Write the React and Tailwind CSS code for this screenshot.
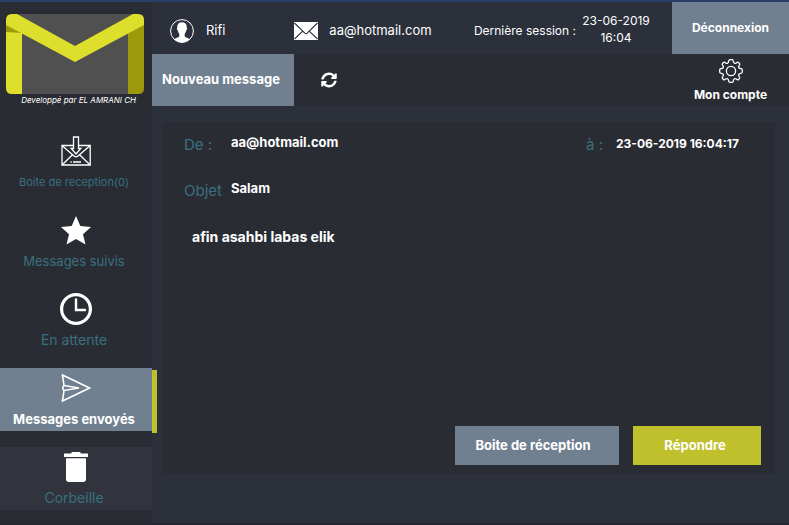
import React from "react";

function Logo() {
  return (
    <svg viewBox="0 0 138 80" className="h-20 w-full" preserveAspectRatio="none" role="img" aria-label="Logo messagerie">
      <path d="M6 0H132Q138 0 138 6V74Q138 80 132 80H6Q0 80 0 74V6Q0 0 6 0Z" fill="#505050" />
      <path d="M0 14L16 19V80H6Q0 80 0 74Z" fill="#dede2c" />
      <path d="M0 10L16 19L0 18Z" fill="#9c9a0a" />
      <path d="M138 10L122 19V80H132Q138 80 138 74Z" fill="#9c9a0a" />
      <path d="M6 0H11L69 32L127 0H132Q138 0 138 6V11L69 48L0 11V6Q0 0 6 0Z" fill="#dede2c" />
    </svg>
  );
}

function InboxIcon() {
  return (
    <svg viewBox="0 0 30 30" className="size-[30px]" fill="none" stroke="#fff" strokeWidth="1.3" aria-hidden="true">
      <path d="M12 9.5H1V29H29.2V9.5H18" />
      <path d="M1 9.5L13 20Q15 21.800 17 20L29.2 9.5M1 29L11.5 18.8M29.2 29L18.5 18.8" />
      <path d="M12.5 1H17.5V12.500H19.8L15 18L10.200 12.500H12.5Z" fill="#292c33" />
      <path d="M12 26H20M9.5 26H10.8" />
    </svg>
  );
}

function StarIcon() {
  return (
    <svg viewBox="0 0 30 29" className="h-[29px] w-[30px]" fill="#fff" aria-hidden="true">
      <path d="M15 0L19.3 10L30 11L22 18.2L24.5 28.5L15 23L5.500 28.5L8 18.2L0 11L10.700 10Z" />
    </svg>
  );
}

function ClockIcon() {
  return (
    <svg viewBox="0 0 32 32" className="size-8" fill="none" stroke="#fff" strokeLinecap="round" aria-hidden="true">
      <circle cx="16" cy="16" r="14.400" strokeWidth="3.200" />
      <path d="M16 6.500V17H25" strokeWidth="2.400" />
    </svg>
  );
}

function SendIcon() {
  return (
    <svg viewBox="0 0 30 28" className="h-7 w-[30px]" fill="none" stroke="#fff" strokeWidth="1.600" aria-hidden="true">
      <path d="M3 11.500L1.500 1L28.500 14L1.500 27L3 16.500" />
      <path d="M3 11.500L18 14L3 16.500Q0.500 14 3 11.500Z" />
    </svg>
  );
}

function TrashIcon() {
  return (
    <svg viewBox="0 0 24 30" className="h-[30px] w-6" fill="#fff" aria-hidden="true">
      <path d="M0 1.500H7L8 0H16L17 1.500H24V5H0Z" />
      <path d="M2 6.300H22V27Q22 30 19 30H5Q2 30 2 27Z" />
    </svg>
  );
}

function UserIcon() {
  return (
    <svg viewBox="0 0 24 24" className="size-6" aria-hidden="true">
      <circle cx="12" cy="12" r="11.400" fill="none" stroke="#fff" strokeWidth="1" />
      <path d="M12 3.200C8.500 3.200 7 5.500 7.300 8.500C6.500 9 7 11 7.800 11.500C8.200 13.300 9 14.300 9.300 15V17.500C8.500 18.700 5.500 19 4.200 20.300C8 24.500 16 24.500 19.800 20.300C18.500 19 15.500 18.700 14.700 17.500V15C15 14.300 15.800 13.300 16.200 11.500C17 11 17.500 9 16.700 8.500C17 5.500 15.500 3.200 12 3.200Z" fill="#fff" />
    </svg>
  );
}

function MailIcon() {
  return (
    <svg viewBox="0 0 24 18" className="h-[18px] w-6" aria-hidden="true">
      <path d="M0 0H24V18H0Z" fill="#fff" />
      <path d="M0.500 1L10.800 11.200Q12 12.200 13.200 11.200L23.500 1M0.500 17L8.500 9.300M23.500 17L15.500 9.300" fill="none" stroke="#2b303b" strokeWidth="1.100" />
    </svg>
  );
}

function RefreshIcon() {
  return (
    <svg viewBox="0 0 512 512" className="size-4" fill="#fff" aria-hidden="true">
      <path d="M371 143C340 114 300 98 256 98C178 98 110 152 91 227C90 232 85 236 79 236H22C15 236 9 229 10 222C32 104 136 16 256 16C321 16 382 41 427 85L463 49C478 34 504 45 504 66V200C504 213 493 224 480 224H346C325 224 314 198 329 183Z" />
      <path d="M32 288H166C187 288 198 314 183 329L141 369C172 398 212 414 256 414C334 414 402 360 421 285C422 280 427 276 433 276H490C497 276 503 283 502 290C480 408 376 496 256 496C191 496 130 471 85 427L49 463C34 478 8 467 8 446V312C8 299 19 288 32 288Z" />
    </svg>
  );
}

function GearIcon() {
  return (
    <svg viewBox="0 0 24 24" className="size-6" fill="none" stroke="#fff" strokeWidth="1.300" strokeLinejoin="round" aria-hidden="true">
      <circle cx="12" cy="12" r="4.600" />
      <path d="M9.700 2.200Q9.900 0.700 11 0.700H13Q14.100 0.700 14.300 2.200C14.600 4.300 16 4.900 17.300 3.900Q18.700 2.700 19.500 3.500L20.500 4.500Q21.300 5.300 20.100 6.700C19.100 8 19.700 9.400 21.800 9.700Q23.300 9.900 23.300 11V13Q23.300 14.100 21.800 14.300C19.700 14.600 19.100 16 20.100 17.300Q21.300 18.700 20.500 19.500L19.500 20.500Q18.700 21.300 17.300 20.100C16 19.100 14.600 19.700 14.300 21.800Q14.100 23.300 13 23.300H11Q9.900 23.300 9.700 21.800C9.400 19.700 8 19.100 6.700 20.100Q5.300 21.300 4.500 20.500L3.500 19.500Q2.700 18.700 3.900 17.300C4.900 16 4.300 14.600 2.200 14.300Q0.700 14.100 0.700 13V11Q0.700 9.900 2.200 9.700C4.300 9.400 4.900 8 3.900 6.700Q2.700 5.300 3.500 4.500L4.500 3.500Q5.300 2.700 6.700 3.900C8 4.900 9.400 4.300 9.700 2.200Z" />
    </svg>
  );
}

const items = [
  { label: "Boite de reception(0)", Icon: InboxIcon, tone: "text-[11px] text-[#3a7080]" },
  { label: "Messages suivis", Icon: StarIcon, tone: "text-[13px] text-[#3a7080]" },
  { label: "En attente", Icon: ClockIcon, tone: "text-[14px] text-[#3a7080]" },
  { label: "Messages envoyés", Icon: SendIcon, active: true, tone: "bg-[#708090] text-[13px] font-bold text-white" },
  { label: "Corbeille", Icon: TrashIcon, tone: "bg-[#31343d] text-[14px] text-[#3a7080]" },
];

function Sidebar() {
  return (
    <aside className="flex w-[152px] shrink-0 flex-col bg-[#292c33]">
      <div className="px-2 pt-3 pl-1.5">
        <Logo />
        <p className="h-[37px] pr-2 text-right text-[8px] leading-3 text-white italic">Developpé par EL AMRANI CH</p>
      </div>
      <nav className="flex flex-col gap-4">
        {items.map(({ label, Icon, tone, active }) => (
          <button key={label} type="button" className={"relative flex h-[63px] flex-col items-center pr-1 whitespace-nowrap " + tone}>
            <span className="flex h-10 items-center pl-1"><Icon /></span>
            <span className="leading-[22px]">{label}</span>
            {active && <span className="absolute top-0.5 left-full h-full w-[5px] bg-[#c0c02c]" />}
          </button>
        ))}
      </nav>
    </aside>
  );
}

function Header() {
  return (
    <header className="flex h-[52px] items-stretch text-[13px] text-white">
      <div className="flex grow items-center justify-between pt-1.5 pr-[22px] pl-[18px]">
        <div className="flex w-[106px] items-center gap-3">
          <UserIcon />
          <span>Rifi</span>
        </div>
        <div className="flex items-center gap-[11px]">
          <MailIcon />
          <span>aa@hotmail.com</span>
        </div>
        <div className="flex items-center gap-1.5 pl-6 whitespace-nowrap">
          <span className="text-[12px]">Dernière session :</span>
          <span className="-mt-1 w-[68px] text-center text-[12px] leading-[17px]">23-06-2019<br />16:04</span>
        </div>
      </div>
      <button type="button" className="w-[117px] shrink-0 bg-[#708090] text-[12px] font-bold">Déconnexion</button>
    </header>
  );
}

function Toolbar() {
  return (
    <div className="flex h-[52px] items-stretch bg-[#292c33] text-white">
      <button type="button" className="w-[142px] bg-[#708090] pr-1 text-[13px] font-bold whitespace-nowrap">Nouveau message</button>
      <button type="button" aria-label="Actualiser" className="ml-4 px-[11px]"><RefreshIcon /></button>
      <button type="button" className="ml-auto flex w-[117px] flex-col items-center gap-0.5 pt-[5px] text-[12px] leading-5 font-bold">
        <GearIcon />
        <span>Mon compte</span>
      </button>
    </div>
  );
}

function Message() {
  return (
    <main className="mt-4 mr-3.5 ml-[11px] flex min-h-[352px] flex-col bg-[#292c33] px-3.5 pt-2.5 pb-[9px] text-white">
      <dl className="flex flex-col gap-[22px] pl-[7px] text-[13px] font-bold">
        <div className="flex items-start justify-between">
          <div className="flex">
            <dt className="w-[47px] pt-0.5 text-[15px] leading-[22px] font-normal text-[#3a7080]">De :</dt>
            <dd className="leading-5">aa@hotmail.com</dd>
          </div>
          <div className="flex pr-[22px]">
            <dt className="w-[30px] pt-0.5 text-[15px] leading-[22px] font-normal text-[#3a7080]">à :</dt>
            <dd className="pt-0.5 text-[12px] leading-5">23-06-2019 16:04:17</dd>
          </div>
        </div>
        <div className="flex">
          <dt className="w-[47px] pt-0.5 text-[15px] leading-[22px] font-normal text-[#3a7080]">Objet</dt>
          <dd className="leading-5">Salam</dd>
        </div>
      </dl>
      <p className="mt-[25px] pl-[15px] text-[14px] leading-5 font-bold">afin asahbi labas elik</p>
      <div className="mt-auto flex justify-end gap-3.5 text-[13px] font-bold">
        <button type="button" className="h-[39px] w-[164px] bg-[#708090] pr-2">Boite de réception</button>
        <button type="button" className="h-[39px] w-32 bg-[#c0c02c] pr-1">Répondre</button>
      </div>
    </main>
  );
}

export default function App() {
  return (
    <div className="flex min-h-screen flex-col border-t-2 border-[#2a406a] bg-[#2b303b] font-['Century_Gothic','Inter',sans-serif]">
      <div className="flex grow">
        <Sidebar />
        <div className="flex min-w-0 grow flex-col">
          <Header />
          <Toolbar />
          <Message />
        </div>
      </div>
      <div className="h-0.5 bg-[#252831]" />
    </div>
  );
}
